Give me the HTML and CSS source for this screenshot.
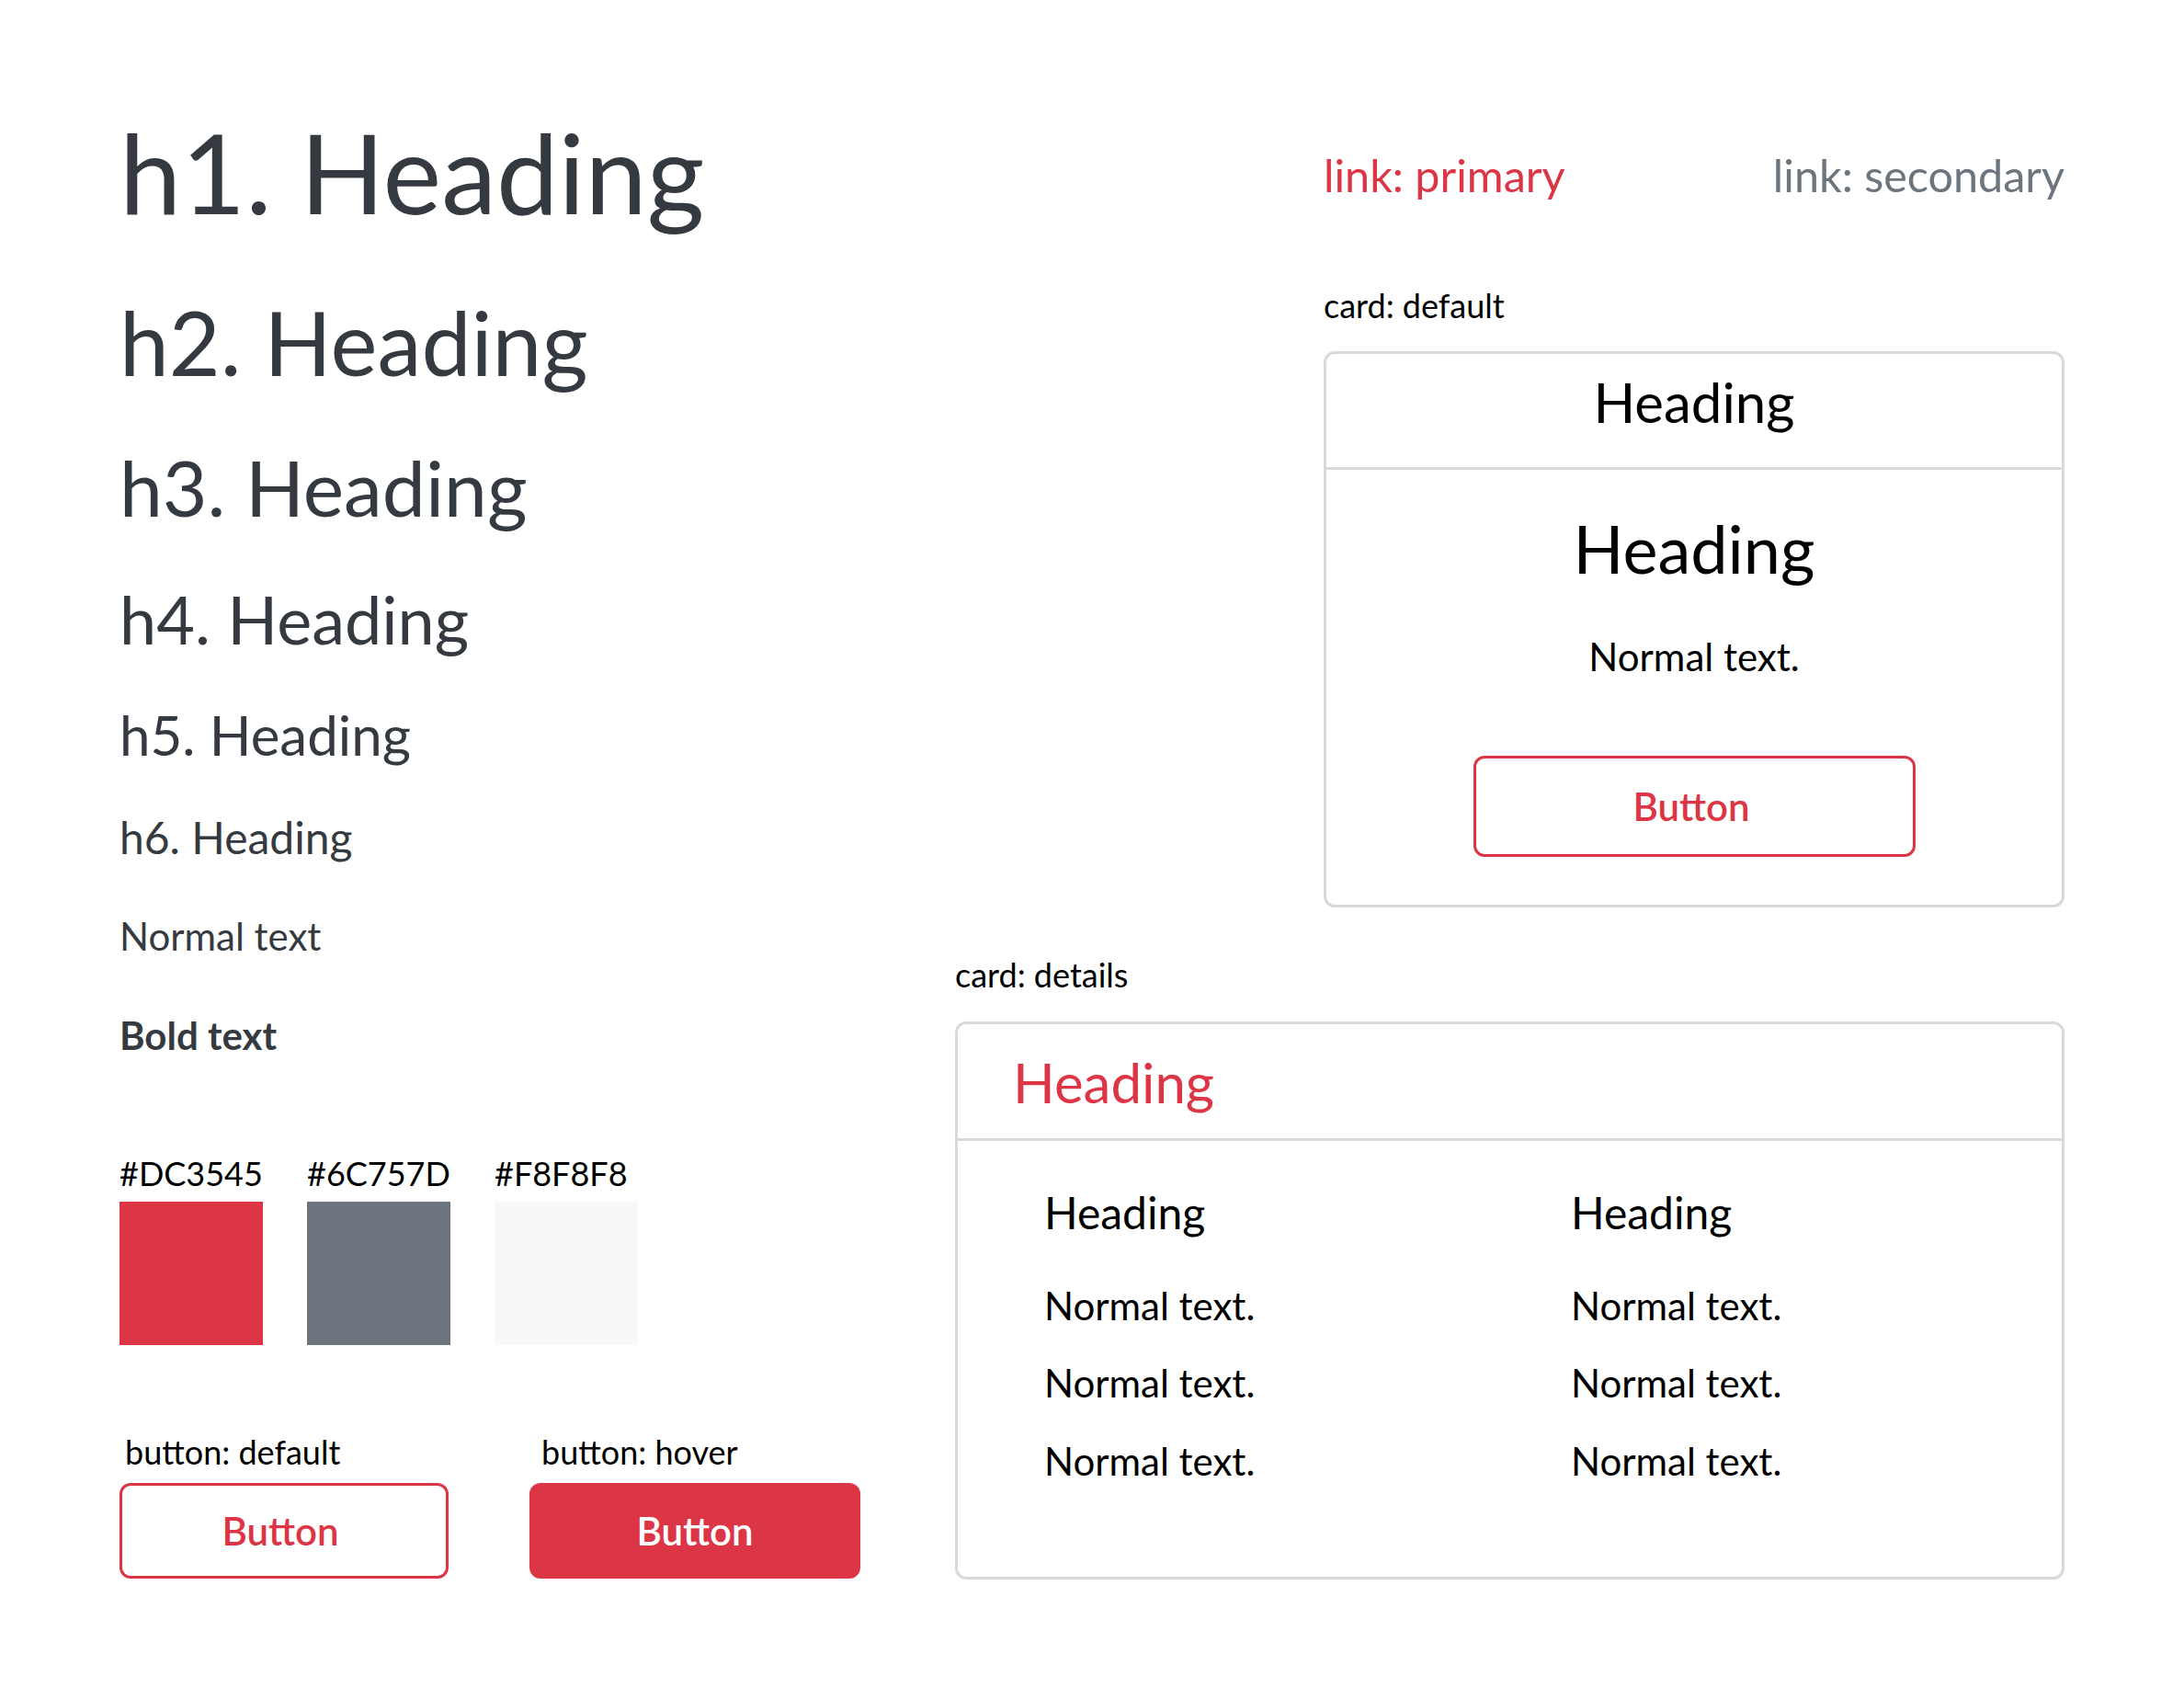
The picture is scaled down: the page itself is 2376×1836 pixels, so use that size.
FILE: index.html
```html
<!DOCTYPE html>
<html lang="en">
<head>
    <meta charset="UTF-8">
    <meta name="viewport" content="width=device-width, initial-scale=1.0">
    <title>Style Guide</title>
    <link rel="stylesheet" href="styles.css">
</head>
<body>
    <div class="page">
        <div class="col-left">
            <h1 class="h1">h1. Heading</h1>
            <h2 class="h2">h2. Heading</h2>
            <h3 class="h3">h3. Heading</h3>
            <h4 class="h4">h4. Heading</h4>
            <h5 class="h5">h5. Heading</h5>
            <h6 class="h6">h6. Heading</h6>
            <p class="text">Normal text</p>
            <p class="text bold">Bold text</p>

            <div class="swatches">
                <div class="swatch">
                    <span class="swatch-label">#DC3545</span>
                    <div class="swatch-color red"></div>
                </div>
                <div class="swatch">
                    <span class="swatch-label">#6C757D</span>
                    <div class="swatch-color grey"></div>
                </div>
                <div class="swatch">
                    <span class="swatch-label">#F8F8F8</span>
                    <div class="swatch-color light"></div>
                </div>
            </div>

            <div class="button-demos">
                <div class="demo">
                    <span class="label demo-label">button: default</span>
                    <button class="btn">Button</button>
                </div>
                <div class="demo">
                    <span class="label demo-label">button: hover</span>
                    <button class="btn btn-hover">Button</button>
                </div>
            </div>
        </div>

        <div class="col-right">
            <div class="top-block">
                <div class="links">
                    <a href="#" class="link link-primary">link: primary</a>
                    <a href="#" class="link link-secondary">link: secondary</a>
                </div>
                <div class="label card-label">card: default</div>
                <div class="card card-default">
                    <div class="card-header">
                        <div class="card-title">Heading</div>
                    </div>
                    <div class="card-body">
                        <div class="card-heading">Heading</div>
                        <div class="card-text">Normal text.</div>
                        <button class="btn card-btn">Button</button>
                    </div>
                </div>
            </div>

            <div class="label card-label details-label">card: details</div>
            <div class="card card-details">
                <div class="card-header details-header">
                    <div class="card-title details-title">Heading</div>
                </div>
                <div class="details-body">
                    <div class="details-col">
                        <div class="details-heading">Heading</div>
                        <div class="details-text">Normal text.</div>
                        <div class="details-text">Normal text.</div>
                        <div class="details-text">Normal text.</div>
                    </div>
                    <div class="details-col">
                        <div class="details-heading">Heading</div>
                        <div class="details-text">Normal text.</div>
                        <div class="details-text">Normal text.</div>
                        <div class="details-text">Normal text.</div>
                    </div>
                </div>
            </div>
        </div>
    </div>
</body>
</html>
```

FILE: styles.css
```css
body {
    font-family: Lato, "Open Sans", sans-serif;
    margin: 0;
    padding: 0;
    background-color: #fff;
    color: #000;
}
.page {
    display: flex;
    gap: 103px;
    padding: 115px 130px 0;
}
.col-left {
    width: 806px;
    flex-shrink: 0;
    color: #343a40;
}
.col-right {
    flex: 1;
    display: flex;
    flex-direction: column;
}

/* headings */
.h1, .h2, .h3, .h4, .h5, .h6 {
    font-weight: 400;
    line-height: 1.2;
    margin: 0;
}
.h1 {
    font-size: 120.5px;
    margin-bottom: 55px;
}
.h2 {
    font-size: 96.5px;
    margin-bottom: 50px;
}
.h3 {
    font-size: 84px;
    margin-bottom: 49px;
}
.h4 {
    font-size: 72px;
    margin-bottom: 46px;
}
.h5 {
    font-size: 60px;
    margin-bottom: 47px;
}
.h6 {
    font-size: 48px;
    margin-bottom: 54px;
}
.text {
    font-size: 42px;
    line-height: 1.2;
    margin: 0 0 57px;
}
.text.bold {
    font-weight: 700;
    margin-bottom: 0;
}

/* colour swatches */
.swatches {
    display: flex;
    gap: 48px;
    margin-top: 104px;
}
.swatch {
    display: flex;
    flex-direction: column;
    gap: 9px;
}
.swatch-label {
    font-size: 36px;
    line-height: 1.2;
    color: #000;
}
.swatch-color {
    width: 156px;
    height: 156px;
}
.swatch-color.red {
    background-color: #dc3545;
}
.swatch-color.grey {
    background-color: #6c757d;
}
.swatch-color.light {
    background-color: #f8f8f8;
}

/* buttons */
.label {
    font-size: 36px;
    line-height: 1.2;
    color: #000;
}
.button-demos {
    display: flex;
    gap: 88px;
    margin-top: 95px;
}
.demo {
    display: flex;
    flex-direction: column;
    gap: 12px;
}
.demo-label {
    padding-left: 6px;
}
.demo + .demo .demo-label {
    padding-left: 13px;
}
.btn {
    width: 358px;
    height: 104px;
    padding: 0 8px 0 0;
    border: 3px solid #dc3545;
    border-radius: 12px;
    background-color: #fff;
    color: #dc3545;
    font-family: Lato, "Open Sans", sans-serif;
    font-size: 42px;
    font-weight: 600;
    cursor: pointer;
}
.btn-hover {
    width: 360px;
    padding: 0;
    background-color: #dc3545;
    color: #fff;
}

/* links */
.top-block {
    width: 806px;
    margin-left: auto;
    padding-top: 46px;
}
.links {
    display: flex;
    justify-content: space-between;
}
.link {
    font-size: 48.5px;
    line-height: 1.2;
    text-decoration: none;
}
.link-primary {
    color: #dc3545;
}
.link-secondary {
    color: #6c757d;
}
.card-label {
    margin-top: 92px;
    margin-bottom: 28px;
}
.details-label {
    margin-top: 52px;
    margin-bottom: 29px;
}

/* cards */
.card {
    border: 3px solid #d9d9d9;
    border-radius: 12px;
    background-color: #fff;
}
.card-header {
    height: 126px;
    box-sizing: border-box;
    display: flex;
    align-items: flex-start;
    justify-content: center;
    padding-top: 16px;
    border-bottom: 3px solid #d9d9d9;
}
.card-title {
    font-size: 60px;
    line-height: 1.2;
}
.card-body {
    display: flex;
    flex-direction: column;
    align-items: center;
    padding: 42px 0 52px;
}
.card-heading {
    font-size: 72px;
    line-height: 1.2;
}
.card-text {
    font-size: 42px;
    line-height: 1.2;
    margin-top: 49px;
}
.card-btn {
    width: 481px;
    height: 110px;
    margin-top: 83px;
    padding-right: 6px;
}

.details-header {
    height: 127px;
    justify-content: flex-start;
    align-items: center;
    padding: 2px 0 0 60px;
}
.details-title {
    color: #dc3545;
}
.details-body {
    display: grid;
    grid-template-columns: 573px 1fr;
    padding: 49px 0 101px 94px;
}
.details-heading {
    font-size: 48px;
    line-height: 1.2;
    margin-bottom: 47px;
}
.details-text {
    font-size: 42px;
    line-height: 1.2;
    margin-bottom: 34px;
}
.details-text:last-child {
    margin-bottom: 0;
}
```
